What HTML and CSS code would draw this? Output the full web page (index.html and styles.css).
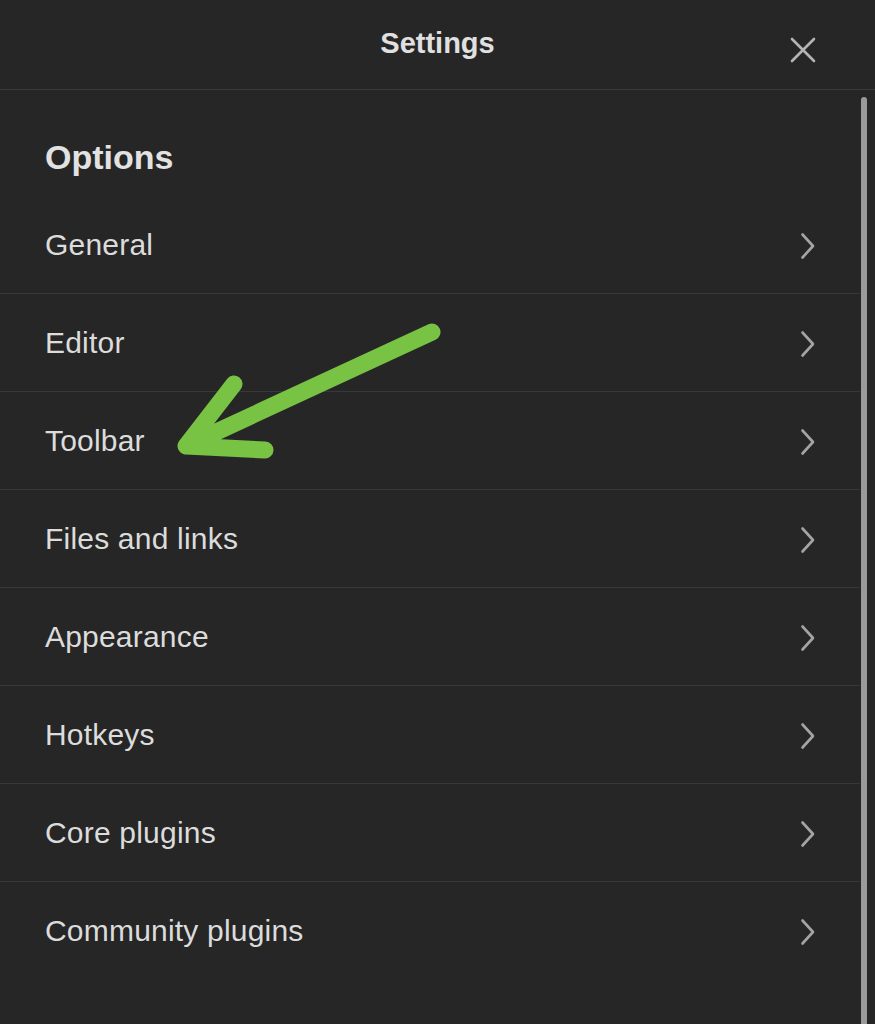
FILE: index.html
```html
<!DOCTYPE html>
<html>
<head>
<meta charset="utf-8">
<link rel="stylesheet" href="styles.css">
</head>
<body>
<div class="modal">
  <header class="topbar">
    <div class="title">Settings</div>
    <button class="close" aria-label="Close">
      <svg width="26" height="26" viewBox="0 0 26 26"><path d="M2 2 L24 24 M24 2 L2 24" stroke="#b4b4b4" stroke-width="2.6" stroke-linecap="round" fill="none"/></svg>
    </button>
  </header>
  <main class="content">
    <h2 class="section">Options</h2>
    <ul class="list">
      <li class="row"><span>General</span><svg class="chev" viewBox="0 0 16 28"><path d="M2.5 2.5 L13 14 L2.5 25.5" /></svg></li>
      <li class="row"><span>Editor</span><svg class="chev" viewBox="0 0 16 28"><path d="M2.5 2.5 L13 14 L2.5 25.5" /></svg></li>
      <li class="row"><span>Toolbar</span><svg class="chev" viewBox="0 0 16 28"><path d="M2.5 2.5 L13 14 L2.5 25.5" /></svg></li>
      <li class="row"><span>Files and links</span><svg class="chev" viewBox="0 0 16 28"><path d="M2.5 2.5 L13 14 L2.5 25.5" /></svg></li>
      <li class="row"><span>Appearance</span><svg class="chev" viewBox="0 0 16 28"><path d="M2.5 2.5 L13 14 L2.5 25.5" /></svg></li>
      <li class="row"><span>Hotkeys</span><svg class="chev" viewBox="0 0 16 28"><path d="M2.5 2.5 L13 14 L2.5 25.5" /></svg></li>
      <li class="row"><span>Core plugins</span><svg class="chev" viewBox="0 0 16 28"><path d="M2.5 2.5 L13 14 L2.5 25.5" /></svg></li>
      <li class="row last"><span>Community plugins</span><svg class="chev" viewBox="0 0 16 28"><path d="M2.5 2.5 L13 14 L2.5 25.5" /></svg></li>
    </ul>
  </main>
  <div class="scrollbar"></div>
  <svg class="arrow" width="875" height="1024" viewBox="0 0 875 1024">
    <path d="M432 332 L186 446 M234 384 L186 446 L265 450" stroke="#78c244" stroke-width="17" stroke-linecap="round" stroke-linejoin="round" fill="none"/>
  </svg>
</div>
</body>
</html>
```
FILE: styles.css
```css
html, body {
  margin: 0;
  padding: 0;
  background: #262626;
}
body {
  width: 875px;
  height: 1024px;
  overflow: hidden;
  font-family: "Liberation Sans", Arial, sans-serif;
  color: #dedede;
}
.modal {
  position: relative;
  height: 1024px;
  overflow: hidden;
}
.topbar {
  height: 89px;
  border-bottom: 1.5px solid #3a3a3a;
  display: flex;
  align-items: center;
  justify-content: center;
  position: relative;
}
.title {
  font-size: 29px;
  font-weight: 600;
  color: #e0e0e0;
  margin-top: -2px;
}
.close {
  position: absolute;
  right: 59px;
  top: 37px;
  background: none;
  border: 0;
  padding: 0;
  width: 26px;
  height: 26px;
}
.section {
  margin: 0;
  height: 106px;
  padding: 28px 0 0 45px;
  display: flex;
  align-items: center;
  font-size: 34px;
  font-weight: 700;
  color: #e2e2e2;
  box-sizing: border-box;
}
.list {
  list-style: none;
  margin: 0;
  padding: 0;
  width: 860px;
}
.row {
  height: 98px;
  box-sizing: border-box;
  border-bottom: 1.5px solid #383838;
  display: flex;
  align-items: center;
  justify-content: space-between;
  padding: 0 44px 0 45px;
  font-size: 30px;
  letter-spacing: 0.2px;
  color: #dcdcdc;
}
.row.last {
  border-bottom: none;
}
.chev {
  width: 16px;
  height: 28px;
  margin-top: 2px;
}
.chev path {
  stroke: #a4a4a4;
  stroke-width: 2.6;
  stroke-linecap: round;
  stroke-linejoin: round;
  fill: none;
}
.scrollbar {
  position: absolute;
  left: 861px;
  top: 97px;
  width: 6px;
  bottom: 0;
  border-radius: 3px 3px 0 0;
  background: #9a9a9a;
}
.arrow {
  position: absolute;
  left: 0;
  top: 0;
  pointer-events: none;
}
```
